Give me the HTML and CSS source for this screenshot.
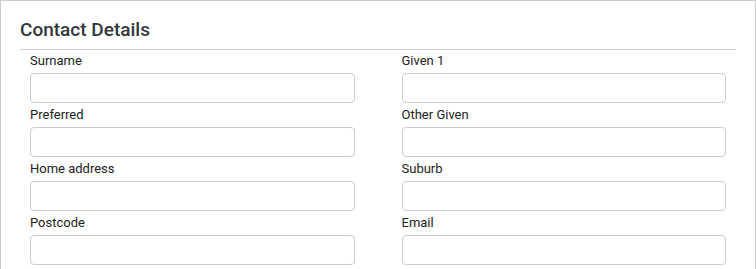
FILE: index.html
```html
<!DOCTYPE html>
<html lang="en">
<head>
<meta charset="utf-8">
<title>Contact Details</title>
<link rel="stylesheet" href="styles.css">
</head>
<body>
<section class="panel">
  <h2 class="panel-title">Contact Details</h2>
  <form class="form-grid">
    <div class="field"><label class="field-label" for="surname">Surname</label><input class="field-input" id="surname" type="text"></div>
    <div class="field"><label class="field-label" for="given1">Given 1</label><input class="field-input" id="given1" type="text"></div>
    <div class="field"><label class="field-label" for="preferred">Preferred</label><input class="field-input" id="preferred" type="text"></div>
    <div class="field"><label class="field-label" for="other">Other Given</label><input class="field-input" id="other" type="text"></div>
    <div class="field"><label class="field-label" for="address">Home address</label><input class="field-input" id="address" type="text"></div>
    <div class="field"><label class="field-label" for="suburb">Suburb</label><input class="field-input" id="suburb" type="text"></div>
    <div class="field"><label class="field-label" for="postcode">Postcode</label><input class="field-input" id="postcode" type="text"></div>
    <div class="field"><label class="field-label" for="email">Email</label><input class="field-input" id="email" type="email"></div>
  </form>
</section>
</body>
</html>
```
FILE: styles.css
```css
html, body {
  margin: 0;
  padding: 0;
  background: #ffffff;
}

body {
  font-family: Roboto, "Liberation Sans", Arial, sans-serif;
  color: #333333;
}

.panel {
  border: 1px solid #cccccc;
  border-bottom: none;
  padding: 0 19px;
}

.panel-title {
  margin: 0;
  padding: 17px 0 7px;
  font-size: 19px;
  line-height: 24px;
  font-weight: 500;
  color: #33373b;
  border-bottom: 1px solid #cccccc;
}

.form-grid {
  display: grid;
  grid-template-columns: 1fr 1fr;
  column-gap: 47px;
  padding: 3px 10px 0;
}

.field {
  display: flex;
  flex-direction: column;
  margin-bottom: 4px;
}

.field-label {
  font-size: 13px;
  line-height: 15px;
  color: #222222;
  margin-bottom: 5px;
}

.field-input {
  box-sizing: border-box;
  height: 30px;
  width: 100%;
  margin: 0;
  padding: 4px 8px;
  border: 1px solid #cccccc;
  border-radius: 4px;
  background: #ffffff;
  font: inherit;
  font-size: 13px;
  outline: none;
}
```
